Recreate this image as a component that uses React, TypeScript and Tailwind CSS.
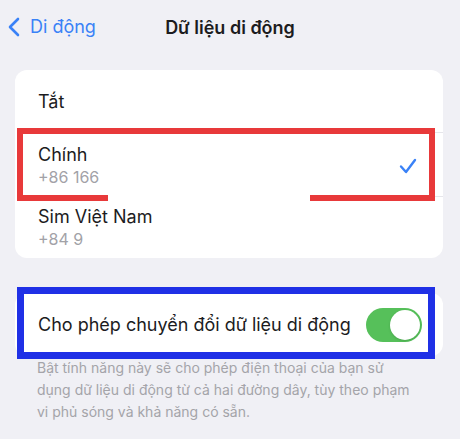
import React from "react";

export default function App() {
  return (
    <div
      className="w-[460px] h-[439px] bg-[#f0f0f5] overflow-hidden text-[#1c1c1e]"
      style={{ fontFamily: "Inter, 'Noto Sans', sans-serif" }}
    >
      {/* Header */}
      <div className="relative h-[55px] flex items-center">
        <div className="absolute left-[7px] top-[17px] flex items-center gap-[9px] text-[#3a82f7]">
          <svg width="14" height="20" viewBox="0 0 14 20" fill="none">
            <path d="M11 2 L3 10 L11 18" stroke="#3a82f7" strokeWidth="2.6" strokeLinecap="round" strokeLinejoin="round" />
          </svg>
          <span className="text-[18px] leading-[20px]">Di động</span>
        </div>
        <div className="w-full text-center text-[18px] font-semibold leading-[20px] pt-[1px]">Dữ liệu di động</div>
      </div>

      {/* Card 1 */}
      <div className="ml-[15px] mt-[15px] w-[428px] bg-white rounded-[12px] relative">
        <div className="h-[62px] flex items-center pl-[23px] text-[18px]">
          <span className="pt-[1px]">Tắt</span>
        </div>
        <div className="ml-[23px] h-px bg-[#e6e6eb]" />
        <div className="h-[63px] relative flex items-center pl-[23px] pr-[26px]">
          <div className="flex-1 flex flex-col pt-[3px]">
            <span className="text-[18px] leading-[22px]">Chính</span>
            <span className="text-[16px] leading-[22px] text-[#a2a2a7]">+86 166</span>
          </div>
          <svg width="18" height="16" viewBox="0 0 18 16" fill="none" className="mt-[2px]">
            <path d="M2 8.5 L7 14 L16 2" stroke="#3a82f7" strokeWidth="2.4" strokeLinecap="round" strokeLinejoin="round" />
          </svg>
          <div className="absolute left-[2px] right-[8px] top-[-5px] h-[73px] border-[6px] border-[#e8393a]" />
          <div className="absolute left-[93px] w-[202px] top-[62px] h-[6px] bg-white" />
        </div>
        <div className="ml-[23px] h-px bg-[#e6e6eb]" />
        <div className="h-[61px] flex items-center pl-[23px]">
          <div className="flex flex-col pt-[1px]">
            <span className="text-[18px] leading-[22px]">Sim Việt Nam</span>
            <span className="text-[16px] leading-[22px] text-[#a2a2a7]">+84 9</span>
          </div>
        </div>
      </div>

      {/* Card 2 */}
      <div className="ml-[15px] mt-[35px] w-[428px] h-[63px] bg-white rounded-[12px] relative flex items-center pl-[23px] pr-[21px]">
        <span className="flex-1 text-[18px]">Cho phép chuyển đổi dữ liệu di động</span>
        <div className="w-[56px] h-[34px] rounded-full bg-[#56c05a] relative">
          <div className="absolute right-[2px] top-[2px] w-[30px] h-[30px] rounded-full bg-white shadow" />
        </div>
        <div className="absolute left-[2px] right-[8px] top-[-6px] h-[72px] border-[7px] border-[#1f30e6]" />
      </div>

      {/* Footer */}
      <div className="pl-[37px] pr-[40px] mt-[1px] text-[14px] leading-[22px] text-[#a4a4a9]">
        Bật tính năng này sẽ cho phép điện thoại của bạn sử dụng dữ liệu di động từ cả hai đường dây, tùy theo phạm vi phủ sóng và khả năng có sẵn.
      </div>
    </div>
  );
}
